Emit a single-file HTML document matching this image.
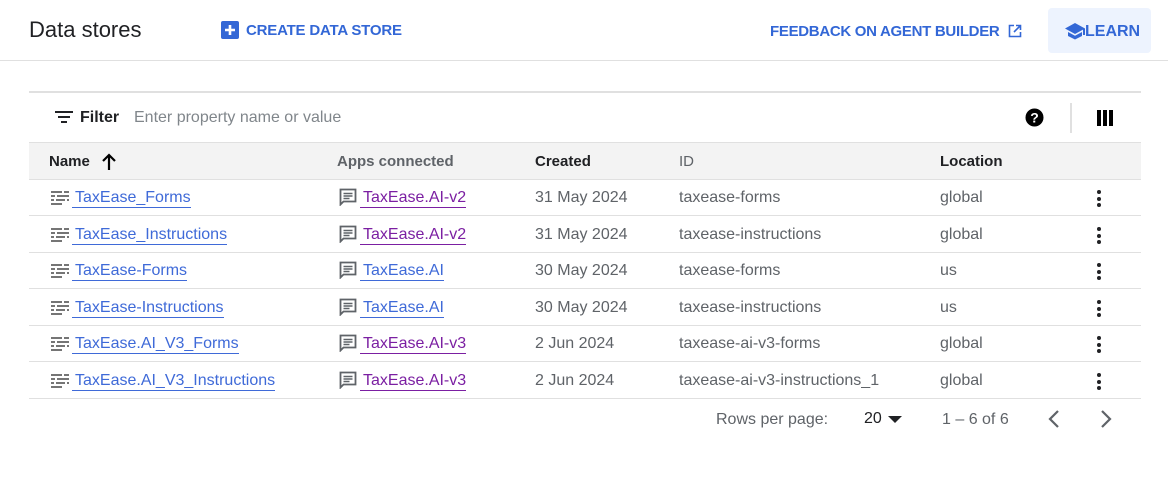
<!DOCTYPE html>
<html><head><style>
*{box-sizing:border-box;margin:0;padding:0}
body{width:1168px;height:480px;background:#fff;font-family:"Liberation Sans",Roboto,sans-serif;position:relative;overflow:hidden;color:#202124}
.abs{position:absolute;white-space:nowrap}
.blue{color:#3367d6}
.hd{font-size:15px;font-weight:bold}
.row{position:absolute;left:29px;width:1112px;height:37px;border-bottom:1px solid #e0e0e0;font-size:16px;color:#5f6368}
.row span{position:absolute;top:10px;white-space:nowrap}
.nm{left:43px;padding-left:3px;color:#3f6ad8;border-bottom:1px solid #3f6ad8;line-height:18px}
.ap{left:331px;padding-left:3px;color:#7b1fa2;border-bottom:1px solid #7b1fa2;line-height:18px}
.ic1{position:absolute;left:22px;top:12px}
.ic2{position:absolute;left:310px;top:9px}
.dots{position:absolute;left:1068px;top:11px;width:4px}
.dots i{display:block;width:4px;height:4px;border-radius:2px;background:#202124;margin-bottom:2.5px}
</style></head><body>
<div class="abs" style="left:29px;top:17px;font-size:22px;color:#202124">Data stores</div>
<svg class="abs" style="left:221px;top:21px" width="18" height="18"><rect width="18" height="18" rx="2" fill="#3367d6"/><path d="M9 4v10M4 9h10" stroke="#fff" stroke-width="2.6"/></svg>
<div class="abs blue" style="left:246px;top:22px;font-size:15px;font-weight:bold;letter-spacing:-0.2px">CREATE DATA STORE</div>
<div class="abs blue" style="left:770px;top:23px;font-size:15px;font-weight:bold;letter-spacing:-0.3px">FEEDBACK ON AGENT BUILDER</div>
<svg class="abs" style="left:1008px;top:24px" width="14" height="14" fill="none" stroke="#3367d6" stroke-width="1.6"><path d="M6 1.5H1.5v11h11V8"/><path d="M8 1.5h4.5V6M12.5 1.5L6 8"/></svg>
<div class="abs" style="left:1048px;top:8px;width:103px;height:45px;background:#e8f0fe;border-radius:4px;opacity:.8"></div>
<svg class="abs" style="left:1064px;top:22px" width="22" height="18"><path d="M11 1L1 6.5l10 5.5 8-4.4V13h2V6.5z M4 10v4l7 3.5 7-3.5v-4l-7 3.8z" fill="#3367d6"/></svg>
<div class="abs blue" style="left:1085px;top:23px;font-size:16px;font-weight:bold">LEARN</div>
<div class="abs" style="left:0;top:60px;width:1168px;height:1px;background:#e0e0e0"></div>
<div class="abs" style="left:29px;top:91px;width:1112px;height:2px;background:#e0e0e0"></div>
<svg class="abs" style="left:55px;top:111px" width="18" height="13"><rect y="0" width="18" height="2" fill="#202124"/><rect x="3" y="5" width="12" height="2" fill="#202124"/><rect x="6" y="10" width="6" height="2" fill="#202124"/></svg>
<div class="abs" style="left:80px;top:109px;font-size:16px;font-weight:bold">Filter</div>
<div class="abs" style="left:134px;top:109px;font-size:16px;color:#80868b">Enter property name or value</div>
<svg class="abs" style="left:1025px;top:108px" width="19" height="19"><circle cx="9.5" cy="9.5" r="9" fill="#000"/><text x="9.5" y="14.5" font-size="14" font-weight="bold" text-anchor="middle" fill="#fff" font-family="Liberation Sans">?</text></svg>
<div class="abs" style="left:1070px;top:103px;width:2px;height:30px;background:#e0e0e0"></div>
<svg class="abs" style="left:1097px;top:110px" width="16" height="16"><rect x="0" y="0" width="4" height="16"/><rect x="6" y="0" width="4" height="16"/><rect x="12" y="0" width="4" height="16"/></svg>
<div class="abs" style="left:29px;top:142px;width:1112px;height:38px;background:#f3f3f3;border-top:1px solid #e0e0e0;border-bottom:1px solid #e0e0e0"></div>
<div class="abs hd" style="left:49px;top:153px">Name</div>
<svg class="abs" style="left:101px;top:153px" width="16" height="18"><path d="M8 17V2M2 8l6-6 6 6" stroke="#000" stroke-width="2.2" fill="none"/></svg>
<div class="abs hd" style="left:337px;top:153px;color:#5f6368">Apps connected</div>
<div class="abs hd" style="left:535px;top:153px">Created</div>
<div class="abs hd" style="left:679px;top:153px;font-weight:normal;color:#5f6368">ID</div>
<div class="abs hd" style="left:940px;top:153px">Location</div>

<div class="row" style="top:179px"><svg class="ic1" width="18" height="14" fill="#757575"><rect x="0" y="0" width="11" height="2"/><rect x="13" y="0" width="5" height="2"/><rect x="0" y="4" width="4" height="2"/><rect x="6" y="4" width="12" height="2"/><rect x="0" y="8" width="3" height="2"/><rect x="5" y="8" width="9" height="2"/><rect x="16" y="8" width="2" height="2"/><rect x="0" y="12" width="11" height="2"/></svg><span class="nm">TaxEase_Forms</span><svg class="ic2" width="18" height="18" fill="none" stroke="#5f6368" stroke-width="1.8"><path d="M1.5 1.5h15v12H4.5l-3 3z"/><path d="M4.5 5.5h9M4.5 8h9M4.5 10.5h6" stroke-width="1.4"/></svg><span class="ap">TaxEase.AI-v2</span><span style="left:506px">31 May 2024</span><span style="left:650px">taxease-forms</span><span style="left:911px">global</span><div class="dots"><i></i><i></i><i></i></div></div>
<div class="row" style="top:216px"><svg class="ic1" width="18" height="14" fill="#757575"><rect x="0" y="0" width="11" height="2"/><rect x="13" y="0" width="5" height="2"/><rect x="0" y="4" width="4" height="2"/><rect x="6" y="4" width="12" height="2"/><rect x="0" y="8" width="3" height="2"/><rect x="5" y="8" width="9" height="2"/><rect x="16" y="8" width="2" height="2"/><rect x="0" y="12" width="11" height="2"/></svg><span class="nm">TaxEase_Instructions</span><svg class="ic2" width="18" height="18" fill="none" stroke="#5f6368" stroke-width="1.8"><path d="M1.5 1.5h15v12H4.5l-3 3z"/><path d="M4.5 5.5h9M4.5 8h9M4.5 10.5h6" stroke-width="1.4"/></svg><span class="ap">TaxEase.AI-v2</span><span style="left:506px">31 May 2024</span><span style="left:650px">taxease-instructions</span><span style="left:911px">global</span><div class="dots"><i></i><i></i><i></i></div></div>
<div class="row" style="top:252px"><svg class="ic1" width="18" height="14" fill="#757575"><rect x="0" y="0" width="11" height="2"/><rect x="13" y="0" width="5" height="2"/><rect x="0" y="4" width="4" height="2"/><rect x="6" y="4" width="12" height="2"/><rect x="0" y="8" width="3" height="2"/><rect x="5" y="8" width="9" height="2"/><rect x="16" y="8" width="2" height="2"/><rect x="0" y="12" width="11" height="2"/></svg><span class="nm">TaxEase-Forms</span><svg class="ic2" width="18" height="18" fill="none" stroke="#5f6368" stroke-width="1.8"><path d="M1.5 1.5h15v12H4.5l-3 3z"/><path d="M4.5 5.5h9M4.5 8h9M4.5 10.5h6" stroke-width="1.4"/></svg><span class="ap" style="color:#3f6ad8;border-color:#3f6ad8">TaxEase.AI</span><span style="left:506px">30 May 2024</span><span style="left:650px">taxease-forms</span><span style="left:911px">us</span><div class="dots"><i></i><i></i><i></i></div></div>
<div class="row" style="top:289px"><svg class="ic1" width="18" height="14" fill="#757575"><rect x="0" y="0" width="11" height="2"/><rect x="13" y="0" width="5" height="2"/><rect x="0" y="4" width="4" height="2"/><rect x="6" y="4" width="12" height="2"/><rect x="0" y="8" width="3" height="2"/><rect x="5" y="8" width="9" height="2"/><rect x="16" y="8" width="2" height="2"/><rect x="0" y="12" width="11" height="2"/></svg><span class="nm">TaxEase-Instructions</span><svg class="ic2" width="18" height="18" fill="none" stroke="#5f6368" stroke-width="1.8"><path d="M1.5 1.5h15v12H4.5l-3 3z"/><path d="M4.5 5.5h9M4.5 8h9M4.5 10.5h6" stroke-width="1.4"/></svg><span class="ap" style="color:#3f6ad8;border-color:#3f6ad8">TaxEase.AI</span><span style="left:506px">30 May 2024</span><span style="left:650px">taxease-instructions</span><span style="left:911px">us</span><div class="dots"><i></i><i></i><i></i></div></div>
<div class="row" style="top:325px"><svg class="ic1" width="18" height="14" fill="#757575"><rect x="0" y="0" width="11" height="2"/><rect x="13" y="0" width="5" height="2"/><rect x="0" y="4" width="4" height="2"/><rect x="6" y="4" width="12" height="2"/><rect x="0" y="8" width="3" height="2"/><rect x="5" y="8" width="9" height="2"/><rect x="16" y="8" width="2" height="2"/><rect x="0" y="12" width="11" height="2"/></svg><span class="nm">TaxEase.AI_V3_Forms</span><svg class="ic2" width="18" height="18" fill="none" stroke="#5f6368" stroke-width="1.8"><path d="M1.5 1.5h15v12H4.5l-3 3z"/><path d="M4.5 5.5h9M4.5 8h9M4.5 10.5h6" stroke-width="1.4"/></svg><span class="ap">TaxEase.AI-v3</span><span style="left:506px">2 Jun 2024</span><span style="left:650px">taxease-ai-v3-forms</span><span style="left:911px">global</span><div class="dots"><i></i><i></i><i></i></div></div>
<div class="row" style="top:362px"><svg class="ic1" width="18" height="14" fill="#757575"><rect x="0" y="0" width="11" height="2"/><rect x="13" y="0" width="5" height="2"/><rect x="0" y="4" width="4" height="2"/><rect x="6" y="4" width="12" height="2"/><rect x="0" y="8" width="3" height="2"/><rect x="5" y="8" width="9" height="2"/><rect x="16" y="8" width="2" height="2"/><rect x="0" y="12" width="11" height="2"/></svg><span class="nm">TaxEase.AI_V3_Instructions</span><svg class="ic2" width="18" height="18" fill="none" stroke="#5f6368" stroke-width="1.8"><path d="M1.5 1.5h15v12H4.5l-3 3z"/><path d="M4.5 5.5h9M4.5 8h9M4.5 10.5h6" stroke-width="1.4"/></svg><span class="ap">TaxEase.AI-v3</span><span style="left:506px">2 Jun 2024</span><span style="left:650px">taxease-ai-v3-instructions_1</span><span style="left:911px">global</span><div class="dots"><i></i><i></i><i></i></div></div>

<div class="abs" style="left:716px;top:411px;font-size:16px;color:#5f6368">Rows per page:</div>
<div class="abs" style="left:864px;top:410px;font-size:16px;color:#202124">20</div>
<svg class="abs" style="left:888px;top:416px" width="14" height="7"><path d="M0 0h14L7 7z" fill="#202124"/></svg>
<div class="abs" style="left:942px;top:411px;font-size:16px;color:#5f6368">1 – 6 of 6</div>
<svg class="abs" style="left:1048px;top:410px" width="12" height="18"><path d="M10 1L2 9l8 8" stroke="#5f6368" stroke-width="2.2" fill="none"/></svg>
<svg class="abs" style="left:1100px;top:410px" width="12" height="18"><path d="M2 1l8 8-8 8" stroke="#5f6368" stroke-width="2.2" fill="none"/></svg>
</body></html>
